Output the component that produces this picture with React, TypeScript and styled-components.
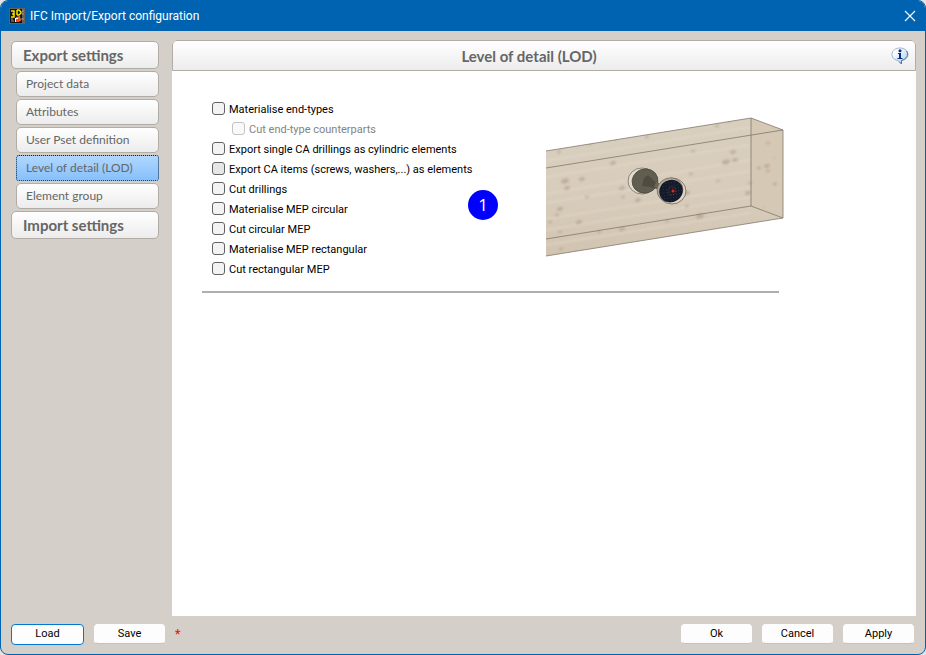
import React, { useState } from "react";
import styled, { createGlobalStyle, css } from "styled-components";

const UI = `Roboto, "Noto Sans", sans-serif`;
const NAV = `Lato, "Open Sans", sans-serif`;

const GlobalStyle = createGlobalStyle`
  * { box-sizing: border-box; }
  body { margin: 0; background: #e4e4e4; font-family: ${UI}; font-size: 11px; color: #000; }
  button { font-family: inherit; }
`;

const Dialog = styled.div`
  display: flex;
  flex-direction: column;
  min-height: 100vh;
  border: 1px solid #0063b1;
  border-radius: 8px;
  background: #d4cfc8;
  overflow: hidden;
`;

const TitleBar = styled.header`
  display: flex;
  align-items: center;
  gap: 5px;
  height: 30px;
  padding: 0 9px 0 8px;
  background: #0063b1;
  color: #fff;
`;

const WindowTitle = styled.h1`
  flex: 1;
  margin: 0;
  font: 400 12px/16px ${UI};
`;

const IconButton = styled.button`
  display: flex;
  padding: 0;
  border: 0;
  background: none;
  color: inherit;
`;

const Body = styled.div`
  display: flex;
  flex: 1;
  gap: 13px;
  padding: 9px 9px 0 10px;
`;

const Sidebar = styled.nav`
  display: flex;
  flex-direction: column;
  align-items: flex-end;
  gap: 2px;
  width: 148px;
  padding-top: 1px;
`;

const NavButton = styled.button<{ $group?: boolean; $active?: boolean }>`
  width: ${(p) => (p.$group ? "148px" : "143px")};
  height: ${(p) => (p.$group ? "28px" : "26px")};
  padding: 0 0 0 ${(p) => (p.$group ? "11px" : "9px")};
  border: 1px solid #b1aca6;
  border-radius: 5px;
  background: linear-gradient(#ffffff, #ececec);
  color: #666;
  text-align: left;
  white-space: nowrap;
  font: ${(p) => (p.$group ? "700 15px/20px" : "400 12px/16px")} ${NAV};
  ${(p) =>
    p.$active &&
    css`
      border: 1px dotted #10243c;
      border-radius: 3px;
      background: linear-gradient(#b0d7ff, #87c0fc);
    `}
`;

const Panel = styled.main`
  flex: 1;
  min-width: 0;
  background: #fff;
  border-radius: 5px 5px 0 0;
`;

const PanelHeader = styled.div`
  display: flex;
  align-items: center;
  gap: 6px;
  height: 31px;
  padding: 0 6px 0 0;
  border: 1px solid #b1aca6;
  border-radius: 5px 5px 0 0;
  background: linear-gradient(#ffffff, #ececec);
`;

const PanelTitle = styled.h2`
  flex: 1;
  margin: 0;
  color: #666;
  text-align: center;
  font: 700 15px/20px ${NAV};
`;

const Section = styled.section`
  display: flex;
  align-items: flex-start;
  margin: 29px 137px 0 30px;
  padding-bottom: 11px;
  border-bottom: 2px solid #b1aeab;
`;

const Options = styled.div`
  flex: 0 0 266px;
  min-width: 0;
  padding-left: 10px;
`;

const Option = styled.label<{ $nested?: boolean }>`
  display: flex;
  align-items: center;
  gap: 4px;
  height: 20px;
  padding-left: ${(p) => (p.$nested ? "20px" : "0")};
  color: ${(p) => (p.$nested ? "#838383" : "#000")};
  white-space: nowrap;
  line-height: 14px;
`;

const Check = styled.input<{ $mixed?: boolean }>`
  appearance: none;
  flex: none;
  width: 13px;
  height: 13px;
  margin: 0 0 3px;
  border: 1px solid #626262;
  border-radius: 3px;
  background: ${(p) => (p.$mixed ? "#e6e6e6" : "#f3f3f3")};
  &:disabled { border-color: #c4c4c4; background: #f9f9f9; }
  &:checked { background: #0063b1; }
`;

const Badge = styled.span`
  flex: none;
  width: 30px;
  height: 30px;
  margin-top: 90px;
  border-radius: 50%;
  background: #00f;
  color: #fff;
  text-align: center;
  font: 400 17px/29px "Open Sans", sans-serif;
`;

const Beam = styled.svg`
  flex: none;
  width: 238px;
  height: 141px;
  margin: 17px 0 0 48px;
`;

const Footer = styled.footer`
  display: flex;
  align-items: center;
  gap: 10px;
  height: 38px;
  padding: 0 11px 2px 10px;
`;

const Push = styled.button<{ $primary?: boolean }>`
  width: ${(p) => (p.$primary ? "73px" : "71px")};
  height: ${(p) => (p.$primary ? "21px" : "20px")};
  padding: 0;
  border: 1px solid ${(p) => (p.$primary ? "#0078d4" : "#fdfdfd")};
  border-bottom-color: ${(p) => (p.$primary ? "#0078d4" : "#c6c1bb")};
  border-radius: 4px;
  background: #fdfdfd;
  color: #000;
  font-size: 11px;
  line-height: 14px;
`;

const Marker = styled.span`
  flex: 1;
  color: #f02000;
  font-weight: 700;
  font-size: 12px;
  line-height: 14px;
`;

const navItems = [
  "Project data",
  "Attributes",
  "User Pset definition",
  "Level of detail (LOD)",
  "Element group",
];

const options = [
  { label: "Materialise end-types" },
  { label: "Cut end-type counterparts", nested: true },
  { label: "Export single CA drillings as cylindric elements" },
  { label: "Export CA items (screws, washers,...) as elements", mixed: true },
  { label: "Cut drillings" },
  { label: "Materialise MEP circular" },
  { label: "Cut circular MEP" },
  { label: "Materialise MEP rectangular" },
  { label: "Cut rectangular MEP" },
];

const knots: [number, number, number][] = [
  [67, 46, 3], [147, 34, 2], [187, 35, 3], [180, 45, 4], [189, 43, 3], [145, 57, 2],
  [19, 64, 4], [36, 62, 3], [21, 71, 3], [76, 71, 3], [14, 92, 3], [11, 98, 2],
  [41, 80, 2], [33, 105, 3], [92, 83, 3], [77, 80, 2], [141, 76, 3], [141, 89, 2],
  [154, 99, 4], [172, 64, 2], [202, 76, 3], [221, 49, 3], [213, 51, 2], [222, 54, 2],
  [228, 41, 1], [222, 26, 2], [76, 112, 3], [53, 115, 2], [14, 115, 2], [15, 132, 2],
  [44, 27, 2], [101, 20, 2], [183, 4, 2], [13, 35, 2], [171, 9, 2], [69, 22, 2],
  [204, 66, 2], [121, 104, 2], [108, 72, 1], [4, 105, 2], [229, 67, 2], [218, 90, 1],
];

function BeamDrawing() {
  return (
    <Beam viewBox="0 0 238 141" role="img" aria-label="Timber beam with a drilled bolt">
      <defs>
        <linearGradient id="wood" x1="0" y1="0" x2="0" y2="1">
          <stop offset="0" stopColor="#d9cfbf" />
          <stop offset="0.5" stopColor="#d8cdbc" />
          <stop offset="1" stopColor="#d1c4b1" />
        </linearGradient>
        <pattern id="dots" width="3" height="3" patternUnits="userSpaceOnUse" patternTransform="rotate(20)">
          <rect width="1" height="1" fill="#4b5668" />
        </pattern>
        <filter id="soft"><feGaussianBlur stdDeviation="0.8" /></filter>
        <clipPath id="outline"><path d="M0 34 205 1 237 13V101L0 139Z" /></clipPath>
      </defs>
      <path d="M0 34 205 1 237 13V101L0 139Z" fill="url(#wood)" />
      <path d="M205 1 237 13V101L205 89Z" fill="#d5c8b5" />
      <g clipPath="url(#outline)">
        <g stroke="#e5dccd" strokeWidth="2" opacity="0.5" filter="url(#soft)">
          <path d="M0 60 205 28M0 77 205 43M0 86 205 54M0 102 205 70M0 113 205 80M0 128 205 96M0 44 205 10" />
        </g>
        <g fill="#a99882" opacity="0.55" filter="url(#soft)">
          {knots.map(([x, y, r]) => (
            <ellipse key={`${x}-${y}`} cx={x} cy={y} rx={r} ry={r * 0.6} transform={`rotate(-15 ${x} ${y})`} />
          ))}
        </g>
      </g>
      <g fill="none" stroke="#82796c" strokeWidth="1" strokeLinejoin="round">
        <path d="M0 34 205 1 237 13V101L0 139" strokeWidth="0.8" />
        <path d="M0 51 237 13M0 122 205 89 237 101M205 1V89" strokeWidth="0.8" />
      </g>
      <ellipse cx="96" cy="64" rx="14" ry="13" fill="#e3dccd" stroke="#756e63" strokeWidth="0.8" />
      <ellipse cx="99" cy="64" rx="13" ry="12" fill="#625d51" stroke="#514c43" strokeWidth="0.8" transform="rotate(-18 99 64)" />
      <path d="M98 61 102 58 108 64 118 69 115 73 104 70 96 69Z" fill="#504b40" />
      <path d="M110 65 118 68 114 72 108 70Z" fill="#6c6557" />
      <ellipse cx="126" cy="74" rx="14" ry="13" fill="#ded5c5" stroke="#6b6459" strokeWidth="0.8" />
      <ellipse cx="124" cy="73" rx="13" ry="12" fill="#b4aa98" stroke="#6b6459" strokeWidth="0.6" transform="rotate(-20 124 73)" />
      <g transform="rotate(-28 125 74)">
        <ellipse cx="125" cy="74" rx="12" ry="11" fill="#11192a" />
        <ellipse cx="125" cy="74" rx="11" ry="10" fill="url(#dots)" opacity="0.5" />
      </g>
      <circle cx="126" cy="74" r="4" fill="none" stroke="#943b3c" strokeWidth="0.8" strokeDasharray="1 1" />
      <circle cx="127" cy="74" r="1.5" fill="#ed2418" />
    </Beam>
  );
}

function AppIcon() {
  return (
    <svg width="16" height="16" viewBox="0 0 16 16" aria-hidden="true">
      <rect width="16" height="16" fill="#68615a" />
      <rect x="1" y="1" width="12" height="14" fill="#141210" />
      <path d="M2 3H5V9H2M3 6H5" fill="none" stroke="#f5e800" strokeWidth="1.5" />
      <path d="M8 2V7M8 2H10L12 4V5L10 7H8" fill="none" stroke="#f5e800" strokeWidth="1.5" />
      <path d="M7 9 11 8 12 13 8 14Z" fill="#ed6b34" />
      <path d="M6 10H9V14H6Z" fill="#fff" />
      <path d="M7 11H10V14H7Z" fill="#ef4b25" />
      <path d="M2 11H4M2 13H5M13 3H15M13 6H15M12 11H15" stroke="#aaa18e" />
    </svg>
  );
}

function InfoIcon() {
  return (
    <svg width="18" height="18" viewBox="0 0 18 18" aria-hidden="true">
      <defs>
        <linearGradient id="bubble" x1="0" y1="0" x2="1" y2="1">
          <stop offset="0.2" stopColor="#ffffff" />
          <stop offset="1" stopColor="#9fcdf0" />
        </linearGradient>
      </defs>
      <path d="M9 1C4.500 1 1 3.600 1 7.500 1 11 4 13 7 13.500L10.500 17V13.500C14 13 17 11 17 7.500 17 3.600 13.500 1 9 1Z" fill="url(#bubble)" stroke="#8aa5bd" strokeWidth="0.8" />
      <path d="M15.500 4C18 8 15.500 12 10.500 13.500V17L8 14.500" fill="none" stroke="#4c7396" strokeWidth="0.9" />
      <circle cx="9" cy="3.700" r="1.500" fill="#0b2b86" />
      <path d="M7 6H10V11H11.500V12H6.500V11H8V7H7Z" fill="#0b2b86" />
    </svg>
  );
}

export default function App() {
  const [active, setActive] = useState("Level of detail (LOD)");
  return (
    <>
      <GlobalStyle />
      <Dialog>
        <TitleBar>
          <AppIcon />
          <WindowTitle>IFC Import/Export configuration</WindowTitle>
          <IconButton aria-label="Close">
            <svg width="12" height="12" viewBox="0 0 12 12" aria-hidden="true">
              <path d="M1 1 11 11M11 1 1 11" stroke="#fff" strokeWidth="1.1" />
            </svg>
          </IconButton>
        </TitleBar>
        <Body>
          <Sidebar>
            <NavButton $group>Export settings</NavButton>
            {navItems.map((item) => (
              <NavButton key={item} $active={item === active} onClick={() => setActive(item)}>
                {item}
              </NavButton>
            ))}
            <NavButton $group>Import settings</NavButton>
          </Sidebar>
          <Panel>
            <PanelHeader>
              <PanelTitle>Level of detail (LOD)</PanelTitle>
              <IconButton aria-label="Information">
                <InfoIcon />
              </IconButton>
            </PanelHeader>
            <Section>
              <Options>
                {options.map((o) => (
                  <Option key={o.label} $nested={o.nested}>
                    <Check type="checkbox" disabled={o.nested} $mixed={o.mixed} />
                    {o.label}
                  </Option>
                ))}
              </Options>
              <Badge>1</Badge>
              <BeamDrawing />
            </Section>
          </Panel>
        </Body>
        <Footer>
          <Push $primary>Load</Push>
          <Push>Save</Push>
          <Marker>*</Marker>
          <Push>Ok</Push>
          <Push>Cancel</Push>
          <Push>Apply</Push>
        </Footer>
      </Dialog>
    </>
  );
}
